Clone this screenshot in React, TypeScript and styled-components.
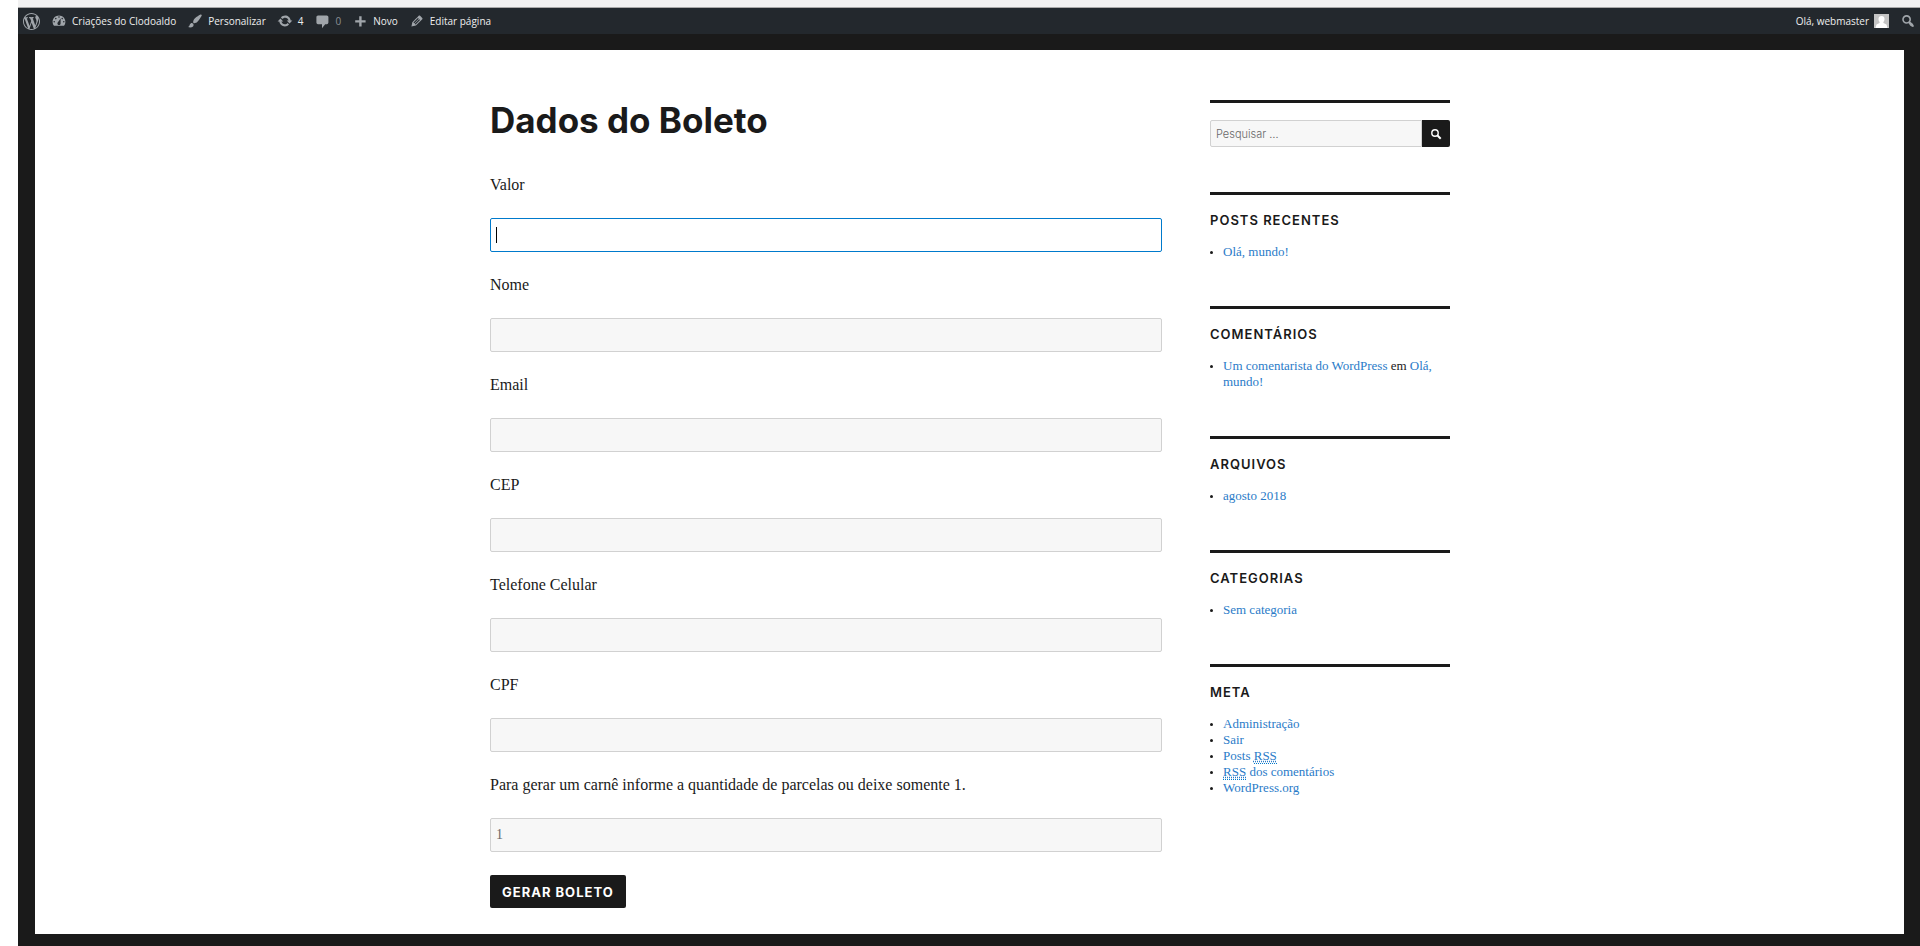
import React from 'react';
import styled, { createGlobalStyle, css } from 'styled-components';

const sans = `Inter, "Liberation Sans", sans-serif`;
const serif = `"Liberation Serif", serif`;
const ink = '#1a1a1a';
const blue = '#007acc';

const GlobalStyle = createGlobalStyle`
  *, *::before, *::after { box-sizing: border-box; }
  body {
    margin: 0;
    background: #fff;
    color: ${ink};
    font-family: ${serif};
  }
`;

const Window = styled.div`
  display: flex;
  flex-direction: column;
  min-height: 100vh;
  margin-left: 18px;
  background: ${ink};
`;

const BrowserEdge = styled.div`
  height: 8px;
  background: #f1f1f1;
  border-bottom: 1px solid #a9a9a9;
`;

const AdminBar = styled.nav`
  display: flex;
  align-items: center;
  justify-content: space-between;
  height: 26px;
  padding: 0 4px 0 5px;
  background: #23282d;
`;

const BarGroup = styled.div`
  display: flex;
  align-items: center;
  gap: 11px;
`;

const BarItem = styled.a<{ $muted?: boolean }>`
  display: flex;
  align-items: center;
  gap: 5px;
  color: ${(p) => (p.$muted ? '#8b9095' : '#eee')};
  font: 500 10px/16px "Open Sans", "Noto Sans", sans-serif;
  text-decoration: none;
  white-space: nowrap;
`;

const BarIcon = styled.svg<{ $size?: number }>`
  display: block;
  width: ${(p) => p.$size ?? 16}px;
  height: ${(p) => p.$size ?? 16}px;
  fill: #a0a5aa;
`;

const Avatar = styled.svg`
  display: block;
  width: 15px;
  height: 14px;
  background: #c4c4c4;
  fill: #fff;
`;

const Page = styled.div`
  flex: 1;
  margin: 16px 16px 12px 17px;
  padding: 50px 24px 26px 25px;
  background: #fff;
`;

const Columns = styled.div`
  display: grid;
  grid-template-columns: minmax(0, 1fr) 240px;
  column-gap: 48px;
  max-width: 960px;
  margin: 0 auto;
`;

const Title = styled.h1`
  margin: 0 0 33px;
  font: 700 35px/40px ${sans};
`;

const Form = styled.form`
  display: flex;
  flex-direction: column;
  align-items: stretch;
  gap: 21px;
`;

const Field = styled.div`
  display: flex;
  flex-direction: column;
  gap: 21px;
`;

const Label = styled.label`
  font-size: 16px;
  line-height: 24px;
  color: ${ink};
`;

const Control = styled.div`
  position: relative;
  display: flex;
`;

const inputBase = css`
  min-width: 0;
  border: 1px solid #d1d1d1;
  border-radius: 2px;
  background: #f7f7f7;
  color: #686868;
  outline: none;
`;

const TextInput = styled.input<{ $active?: boolean }>`
  ${inputBase}
  flex: 1;
  height: 34px;
  padding: 0 5px;
  font: 14px/24px ${serif};
  ${(p) =>
    p.$active &&
    css`
      border-color: ${blue};
      background: #fff;
      color: ${ink};
    `}
`;

const Caret = styled.span`
  position: absolute;
  top: 9px;
  left: 6px;
  width: 1px;
  height: 16px;
  background: #000;
`;

const Submit = styled.button`
  align-self: flex-start;
  height: 33px;
  margin-top: 2px;
  padding: 0 12px;
  border: 0;
  border-radius: 2px;
  background: ${ink};
  color: #fff;
  font: 700 13px/16px ${sans};
  letter-spacing: 1px;
  text-transform: uppercase;
`;

const Widget = styled.section`
  margin-bottom: 46px;
  padding-top: 17px;
  border-top: 3px solid ${ink};

  &:first-child {
    margin-bottom: 45px;
  }
`;

const WidgetTitle = styled.h2`
  margin: 0 0 16px;
  font: 600 13px/16px ${sans};
  letter-spacing: 1px;
  text-transform: uppercase;
`;

const List = styled.ul`
  margin: 0;
  padding-left: 13px;
  font-size: 13px;
  line-height: 16px;
`;

const Item = styled.li`
  &::marker {
    font-size: 10px;
  }
`;

const Link = styled.a`
  color: #2a7bc8;
  text-decoration: none;
`;

const Abbr = styled.abbr`
  border-bottom: 1px dotted ${blue};
  text-decoration: underline dotted;
`;

const SearchForm = styled.form`
  display: flex;
  height: 27px;
`;

const SearchInput = styled.input`
  ${inputBase}
  flex: 1;
  padding: 0 5px;
  border-radius: 2px 0 0 2px;
  font: 300 11px/16px ${sans};
  &::placeholder {
    color: #686868;
    opacity: 1;
  }
`;

const SearchButton = styled.button`
  display: flex;
  align-items: center;
  justify-content: center;
  width: 28px;
  padding: 0;
  border: 0;
  border-radius: 0 2px 2px 0;
  background: ${ink};
`;

const icons = {
  wordpress:
    'M20 10c0-5.51-4.49-10-10-10C4.48 0 0 4.49 0 10c0 5.52 4.48 10 10 10 5.51 0 10-4.48 10-10zM7.78 15.37L4.37 6.22c.55-.02 1.17-.08 1.17-.08.5-.06.44-1.13-.06-1.11 0 0-1.45.11-2.37.11-.18 0-.37 0-.58-.01C4.12 2.69 6.87 1.11 10 1.11c2.33 0 4.45.87 6.05 2.34-.68-.11-1.65.39-1.65 1.58 0 .74.45 1.36.9 2.1.35.61.55 1.36.55 2.46 0 1.49-1.4 5-1.4 5l-3.03-8.37c.54-.02.82-.17.82-.17.5-.05.44-1.25-.06-1.22 0 0-1.44.12-2.38.12-.87 0-2.33-.12-2.33-.12-.5-.03-.56 1.2-.06 1.22l.92.08 1.26 3.41zM17.41 10c.24-.64.74-1.87.43-4.25.7 1.29 1.05 2.71 1.05 4.25 0 3.29-1.73 6.24-4.4 7.78.97-2.59 1.94-5.2 2.92-7.78zM6.1 18.09C3.12 16.65 1.11 13.53 1.11 10c0-1.3.23-2.48.72-3.59C3.25 10.3 4.67 14.2 6.1 18.09zm4.03-6.63l2.58 6.98c-.86.29-1.76.45-2.71.45-.79 0-1.57-.11-2.29-.33.81-2.38 1.62-4.74 2.42-7.1z',
  dashboard:
    'M3.76 16h12.48c1.1-1.37 1.76-3.11 1.76-5 0-4.42-3.58-8-8-8s-8 3.58-8 8c0 1.89.66 3.63 1.76 5zM10 4c.55 0 1 .45 1 1s-.45 1-1 1-1-.45-1-1 .45-1 1-1zM6 6c.55 0 1 .45 1 1s-.45 1-1 1-1-.45-1-1 .45-1 1-1zm8 0c.55 0 1 .45 1 1s-.45 1-1 1-1-.45-1-1 .45-1 1-1zm-5.37 5.55L12 7v6c0 1.1-.9 2-2 2s-2-.9-2-2c0-.57.24-1.08.63-1.45zM4 10c.55 0 1 .45 1 1s-.45 1-1 1-1-.45-1-1 .45-1 1-1zm12 0c.55 0 1 .45 1 1s-.45 1-1 1-1-.45-1-1 .45-1 1-1z',
  brush:
    'M18.33 3.57s.27-.8-.31-1.36c-.53-.52-1.22-.24-1.22-.24-.61.3-5.76 3.47-7.67 5.57-.86.96-2.06 3.79-1.09 4.82.92.98 3.96-.17 4.79-1 2.06-2.06 5.21-7.17 5.5-7.79zM1.4 17.65c2.37-1.56 1.46-3.41 3.23-4.64.93-.65 2.22-.62 3.08.29.63.67.8 2.57-.16 3.46-1.57 1.45-4 1.55-6.15.89z',
  update:
    'M10.2 3.28c3.53 0 6.43 2.61 6.92 6h2.08l-3.5 4-3.5-4h2.32c-.45-1.97-2.21-3.45-4.32-3.45-1.45 0-2.73.71-3.54 1.78L4.95 5.66C6.23 4.2 8.11 3.28 10.2 3.28zm-.4 13.44c-3.52 0-6.43-2.61-6.92-6H.8l3.5-4c1.17 1.33 2.33 2.67 3.5 4H5.48c.45 1.97 2.21 3.45 4.32 3.45 1.45 0 2.73-.71 3.54-1.78l1.71 1.95c-1.28 1.46-3.15 2.38-5.25 2.38z',
  comment:
    'M5 3h11c1.1 0 2 .9 2 2v7c0 1.1-.9 2-2 2h-2l-4 5v-5H5c-1.1 0-2-.9-2-2V5c0-1.1.9-2 2-2z',
  plus: 'M17 9v3h-5v5H9v-5H4V9h5V4h3v5h5z',
  pencil:
    'M13.89 3.39l2.71 2.72c.46.46.42 1.24.03 1.64l-8.01 8.02-5.56 1.16 1.16-5.58s7.6-7.63 7.99-8.03c.39-.39 1.22-.39 1.68.07zm-2.73 2.79l-5.59 5.61 1.11 1.11 5.54-5.65zm-2.97 8.23l5.58-5.6-1.07-1.08-5.59 5.6z',
  search:
    'M12.14 4.18c1.87 1.87 2.11 4.75.72 6.89.12.1.22.21.36.31.2.16.47.36.81.59.34.24.56.39.66.47.42.31.73.57.94.78.32.32.6.65.84 1 .25.35.44.69.59 1.04.14.35.21.68.18 1-.02.32-.14.59-.36.81s-.49.34-.81.36c-.31.02-.65-.04-.99-.19-.35-.14-.7-.34-1.04-.59-.35-.24-.68-.52-1-.84-.21-.21-.47-.52-.77-.93-.1-.13-.25-.35-.47-.66-.22-.32-.4-.57-.56-.78-.16-.2-.29-.35-.44-.5-2.07 1.09-4.69.76-6.44-.98-2.14-2.15-2.14-5.64 0-7.78 2.15-2.15 5.63-2.15 7.78 0zm-1.41 6.36c1.36-1.37 1.36-3.58 0-4.95-1.37-1.37-3.59-1.37-4.95 0-1.37 1.37-1.37 3.58 0 4.95 1.36 1.37 3.58 1.37 4.95 0z',
};

function Icon({ name, size }: { name: keyof typeof icons; size?: number }) {
  return (
    <BarIcon viewBox="0 0 20 20" $size={size} aria-hidden="true">
      <path d={icons[name]} />
    </BarIcon>
  );
}

const barItems: { icon: keyof typeof icons; text: string; muted?: boolean }[] = [
  { icon: 'dashboard', text: 'Criações do Clodoaldo' },
  { icon: 'brush', text: 'Personalizar' },
  { icon: 'update', text: '4' },
  { icon: 'comment', text: '0', muted: true },
  { icon: 'plus', text: 'Novo' },
  { icon: 'pencil', text: 'Editar página' },
];

const fields: { id: string; label: string; value?: string; active?: boolean }[] = [
  { id: 'valor', label: 'Valor', active: true },
  { id: 'nome', label: 'Nome' },
  { id: 'email', label: 'Email' },
  { id: 'cep', label: 'CEP' },
  { id: 'celular', label: 'Telefone Celular' },
  { id: 'cpf', label: 'CPF' },
  {
    id: 'parcelas',
    label: 'Para gerar um carnê informe a quantidade de parcelas ou deixe somente 1.',
    value: '1',
  },
];

const widgets: { title: string; items: React.ReactNode[] }[] = [
  { title: 'Posts recentes', items: [<Link href="#ola">Olá, mundo!</Link>] },
  {
    title: 'Comentários',
    items: [
      <>
        <Link href="#autor">Um comentarista do WordPress</Link> em <Link href="#ola">Olá, mundo!</Link>
      </>,
    ],
  },
  { title: 'Arquivos', items: [<Link href="#agosto">agosto 2018</Link>] },
  { title: 'Categorias', items: [<Link href="#categoria">Sem categoria</Link>] },
  {
    title: 'Meta',
    items: [
      <Link href="#admin">Administração</Link>,
      <Link href="#sair">Sair</Link>,
      <Link href="#feed">
        Posts <Abbr>RSS</Abbr>
      </Link>,
      <Link href="#feed-comentarios">
        <Abbr>RSS</Abbr> dos comentários
      </Link>,
      <Link href="#wordpress">WordPress.org</Link>,
    ],
  },
];

export default function App() {
  return (
    <>
      <GlobalStyle />
      <Window>
        <BrowserEdge />
        <AdminBar>
          <BarGroup>
            <BarItem href="#sobre" aria-label="Sobre o WordPress">
              <Icon name="wordpress" size={17} />
            </BarItem>
            {barItems.map((item) => (
              <BarItem key={item.icon} href={`#${item.icon}`} $muted={item.muted}>
                <Icon name={item.icon} />
                {item.text}
              </BarItem>
            ))}
          </BarGroup>
          <BarGroup>
            <BarItem href="#perfil">
              Olá, webmaster
              <Avatar viewBox="0 0 15 14" aria-hidden="true">
                <path d="M7.5 2C5.500 2 4.500 3.300 4.500 5c0 1.300.5 2.400 1.200 3L5.500 9 2.500 10.500 1.500 14h12l-1-3.500-3-1.500-.2-1c.7-.6 1.200-1.700 1.200-3 0-1.700-1-3-3-3z" />
              </Avatar>
            </BarItem>
            <BarItem href="#pesquisa" aria-label="Pesquisar">
              <Icon name="search" />
            </BarItem>
          </BarGroup>
        </AdminBar>
        <Page>
          <Columns>
            <main>
              <Title>Dados do Boleto</Title>
              <Form onSubmit={(e) => e.preventDefault()}>
                {fields.map((f) => (
                  <Field key={f.id}>
                    <Label htmlFor={f.id}>{f.label}</Label>
                    <Control>
                      <TextInput id={f.id} type="text" defaultValue={f.value} $active={f.active} />
                      {f.active && <Caret />}
                    </Control>
                  </Field>
                ))}
                <Submit type="submit">Gerar boleto</Submit>
              </Form>
            </main>
            <aside>
              <Widget>
                <SearchForm role="search" onSubmit={(e) => e.preventDefault()}>
                  <SearchInput type="search" placeholder="Pesquisar …" aria-label="Pesquisar por" />
                  <SearchButton type="submit" aria-label="Pesquisar">
                    <svg width="12" height="12" viewBox="0 0 12 12" fill="none" stroke="#fff" aria-hidden="true">
                      <circle cx="5" cy="5" r="3.200" strokeWidth="1.400" />
                      <path d="M7.300 7.300l3.400 3.400" strokeWidth="2" />
                    </svg>
                  </SearchButton>
                </SearchForm>
              </Widget>
              {widgets.map((w) => (
                <Widget key={w.title}>
                  <WidgetTitle>{w.title}</WidgetTitle>
                  <List>
                    {w.items.map((item, i) => (
                      <Item key={i}>{item}</Item>
                    ))}
                  </List>
                </Widget>
              ))}
            </aside>
          </Columns>
        </Page>
      </Window>
    </>
  );
}
